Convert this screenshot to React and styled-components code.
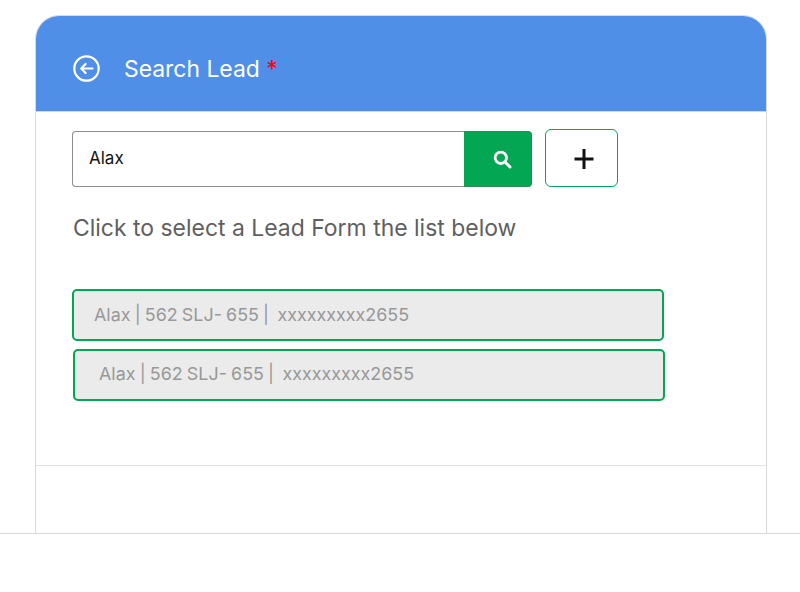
import React from "react";
import styled, { createGlobalStyle } from "styled-components";

const GlobalStyle = createGlobalStyle`
  html, body {
    margin: 0;
    padding: 0;
    background: #fff;
    font-family: Inter, "Liberation Sans", sans-serif;
  }
`;

const Page = styled.div`
  width: 800px;
  height: 592px;
  overflow: hidden;
  display: flex;
  flex-direction: column;
`;

const CardArea = styled.div`
  height: 518px;
  flex: none;
  padding: 15px 33px 0 35px;
  overflow: hidden;
`;

const Card = styled.div`
  width: 732px;
  height: 540px;
  box-sizing: border-box;
  border: 1px solid #d9d9d9;
  border-radius: 24px 24px 0 0;
  overflow: hidden;
`;

const Header = styled.div`
  height: 96px;
  box-sizing: border-box;
  background: #508fe8;
  border-bottom: 1px solid #c9d9f2;
  display: flex;
  align-items: center;
  padding: 9px 0 0 37px;
  gap: 24px;
  color: #fff;
`;

const BackIcon = styled.svg`
  width: 27px;
  height: 27px;
  display: block;
`;

const Title = styled.div`
  margin-top: 1px;
  font-size: 22.9px;
  font-weight: 400;
  line-height: 28px;
`;

const Required = styled.span`
  color: #f00;
`;

const Body = styled.div`
  height: 354px;
  box-sizing: border-box;
  padding: 17px 0 0 36px;
  border-bottom: 1px solid #e2e2e2;
`;

const SearchRow = styled.div`
  display: flex;
  align-items: flex-end;
  gap: 13px;
`;

const SearchBox = styled.div`
  width: 460px;
  height: 56px;
  display: flex;
`;

const SearchInput = styled.div`
  flex: 1;
  box-sizing: border-box;
  border: 1px solid #8e8e8e;
  border-right: none;
  border-radius: 4px 0 0 4px;
  padding-left: 16px;
  font-size: 17px;
  line-height: 52px;
  color: #111;
`;

const SearchButton = styled.div`
  width: 68px;
  box-sizing: border-box;
  background: #03a652;
  border: 1px solid #2c8a5b;
  border-left: none;
  border-radius: 0 4px 4px 0;
  display: flex;
  align-items: center;
  justify-content: center;
  padding-left: 9px;
`;

const AddButton = styled.div`
  width: 73px;
  height: 58px;
  box-sizing: border-box;
  border: 1px solid #03a652;
  border-radius: 6px;
  display: flex;
  align-items: center;
  justify-content: center;
  padding: 2px 0 0 4px;
`;

const Hint = styled.div`
  margin: 26px 0 0 1px;
  font-size: 22.95px;
  line-height: 30px;
  color: #5f5f5f;
`;

const List = styled.div`
  margin-top: 46px;
  display: flex;
  flex-direction: column;
  gap: 8px;
`;

const LeadItem = styled.div`
  width: 592px;
  height: 52px;
  box-sizing: border-box;
  margin-left: ${(p) => p.$shift}px;
  padding-left: ${(p) => p.$indent}px;
  background: #ebebeb;
  border: 2px solid #03a652;
  border-radius: 5px;
  font-size: 17.9px;
  word-spacing: -0.85px;
  line-height: ${(p) => p.$line}px;
  color: #989898;
  white-space: pre;
`;

const Footer = styled.div`
  flex: none;
  height: 59px;
  border-top: 1px solid #d9d9d9;
  background: #fff;
`;

const leads = [
  { shift: 0, indent: 20, line: 47 },
  { shift: 1, indent: 24, line: 46 },
];

export default function App() {
  return (
    <Page>
      <GlobalStyle />
      <CardArea>
        <Card>
          <Header>
            <BackIcon viewBox="0 0 27 27" fill="none" stroke="#fff" strokeWidth="2.2" strokeLinecap="round" strokeLinejoin="round">
              <circle cx="13.5" cy="13.5" r="12.2" />
              <path d="M19.5 13.5H8.2M12.6 9L8.2 13.5l4.4 4.5" />
            </BackIcon>
            <Title>
              Search Lead <Required>*</Required>
            </Title>
          </Header>
          <Body>
            <SearchRow>
              <SearchBox>
                <SearchInput>Alax</SearchInput>
                <SearchButton>
                  <svg width="19" height="19" viewBox="0 0 19 19" fill="none" stroke="#fff" strokeLinecap="round">
                    <circle cx="7.8" cy="7.8" r="5.7" strokeWidth="2.8" />
                    <path d="M12.3 12.3L17 17" strokeWidth="3" />
                  </svg>
                </SearchButton>
              </SearchBox>
              <AddButton>
                <svg width="20" height="20" viewBox="0 0 20 20" stroke="#111" strokeWidth="3">
                  <path d="M10 0v20M0.5 10h19" />
                </svg>
              </AddButton>
            </SearchRow>
            <Hint>Click to select a Lead Form the list below</Hint>
            <List>
              {leads.map((lead) => (
                <LeadItem key={lead.indent} $shift={lead.shift} $indent={lead.indent} $line={lead.line}>
                  Alax | 562 SLJ- 655 |  xxxxxxxxx2655
                </LeadItem>
              ))}
            </List>
          </Body>
        </Card>
      </CardArea>
      <Footer />
    </Page>
  );
}
